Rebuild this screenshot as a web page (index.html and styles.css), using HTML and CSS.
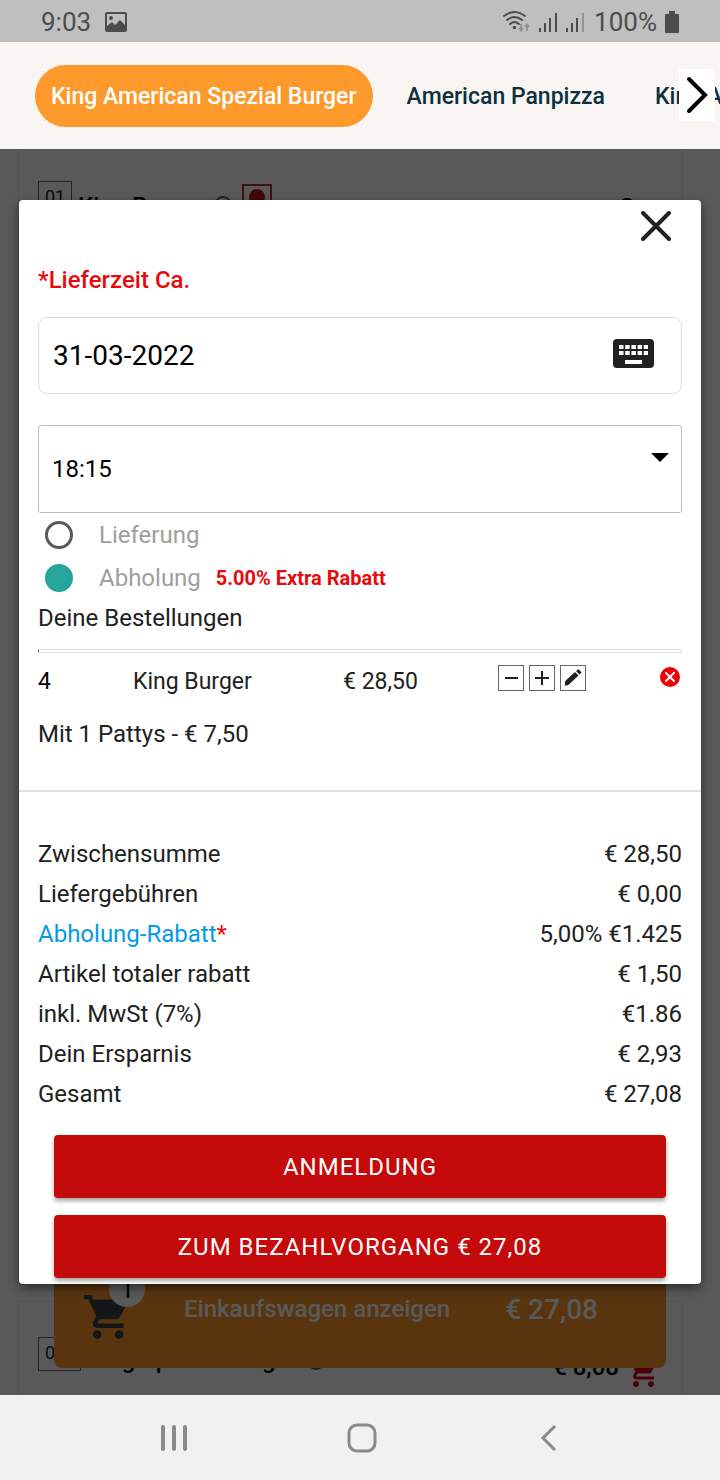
FILE: index.html
```html
<!DOCTYPE html>
<html lang="de">
<head>
    <meta charset="UTF-8">
    <meta name="viewport" content="width=device-width, initial-scale=1.0">
    <title>King Burger - Bestellung</title>
    <link rel="stylesheet" href="styles.css">
</head>
<body>
    <!-- Status bar -->
    <div class="status-bar">
        <span>9:03</span>
        <svg class="status-picture" width="22" height="20" viewBox="0 0 22 20">
            <path fill="#4c4c4c" fill-rule="evenodd" d="M2 0h18a2 2 0 0 1 2 2v16a2 2 0 0 1-2 2H2a2 2 0 0 1-2-2V2a2 2 0 0 1 2-2zM2 2v12l5-4 3 3 5-5 5 5V2zM6 4a2 2 0 1 1 0 4a2 2 0 0 1 0-4z"/>
        </svg>
        <div class="status-right">
            <svg width="28" height="22" viewBox="0 0 28 22">
                <g fill="none" stroke="#4c4c4c" stroke-width="2" stroke-linecap="round">
                    <path d="M2 5q10.500-8 21 0"/>
                    <path d="M5 9q7.500-6 15 0"/>
                    <path d="M8 13q4.500-4 9 0"/>
                </g>
                <circle cx="12.500" cy="16.500" r="1.800" fill="#4c4c4c"/>
                <path d="M19 13v6M17 17l2 2.500 2-2.500M25 20v-6M23 16l2-2.500 2 2.500" fill="none" stroke="#929292" stroke-width="2"/>
            </svg>
            <svg width="20" height="22" viewBox="0 0 20 22">
                <path d="M2 17v4M7 12v9M12 7v14M18 2v19" stroke="#4c4c4c" stroke-width="2"/>
            </svg>
            <svg width="20" height="22" viewBox="0 0 20 22">
                <path d="M1 17v4M6 12v9M11 7v14" stroke="#4c4c4c" stroke-width="2"/>
                <path d="M17 2v19" stroke="#929292" stroke-width="2"/>
            </svg>
            <span>100%</span>
            <svg width="14" height="22" viewBox="0 0 14 22">
                <path fill="#4c4c4c" d="M4 0h6v3h3a1 1 0 0 1 1 1v17a1 1 0 0 1-1 1H1a1 1 0 0 1-1-1V4a1 1 0 0 1 1-1h3z"/>
            </svg>
        </div>
    </div>

    <!-- Categories -->
    <nav class="categories">
        <a href="#spezial" class="category active">King American Spezial Burger</a>
        <a href="#panpizza" class="category">American Panpizza</a>
        <a href="#american" class="category">King American</a>
        <button type="button" class="scroll-next" aria-label="Weiter">
            <svg width="22" height="38" viewBox="0 0 22 38">
                <path d="M3 3l16 16L3 35" fill="none" stroke="#000" stroke-width="4" stroke-linecap="round"/>
            </svg>
        </button>
    </nav>

    <div class="shop">
        <main class="menu">
            <div class="product product-first">
                <span class="product-number">01</span>
                <span class="product-name">King Burger</span>
                <svg class="product-info" width="20" height="20" viewBox="0 0 20 20">
                    <circle cx="10" cy="10" r="8" fill="none" stroke="#555" stroke-width="2"/>
                </svg>
                <svg class="product-type" width="30" height="30" viewBox="0 0 30 30">
                    <rect x="1" y="1" width="28" height="28" fill="none" stroke="#b33" stroke-width="2"/>
                    <circle cx="15" cy="13" r="8" fill="#c5121c"/>
                </svg>
                <svg class="product-size" width="16" height="16" viewBox="0 0 16 16">
                    <circle cx="8" cy="8" r="7" fill="none" stroke="#000" stroke-width="2"/>
                </svg>
            </div>
            <div class="product product-second">
                <span class="product-number wide">02</span>
                <span class="product-name">King Spezial Burger</span>
                <svg class="product-info" width="20" height="20" viewBox="0 0 20 20">
                    <circle cx="10" cy="10" r="8" fill="none" stroke="#555" stroke-width="2"/>
                </svg>
                <span class="product-price">€ 8,08</span>
                <svg class="product-cart" width="30" height="30" viewBox="1 2 20 20">
                    <path fill="#d5001c" d="M7 18c-1.100 0-1.990.9-1.990 2S5.900 22 7 22s2-.9 2-2-.9-2-2-2zM1 2v2h2l3.600 7.590-1.350 2.450c-.16.28-.25.61-.25.96 0 1.100.9 2 2 2h12v-2H7.420c-.14 0-.25-.11-.25-.25l.03-.12.9-1.630h7.450c.75 0 1.410-.41 1.750-1.030l3.580-6.490A1 1 0 0 0 20 4H5.210l-.94-2H1zm16 16c-1.100 0-1.990.9-1.990 2s.89 2 1.990 2 2-.9 2-2-.9-2-2-2z"/>
                </svg>
            </div>
            <button type="button" class="cart-bar">
                <span class="cart-icon">
                    <svg width="44" height="44" viewBox="1 2 20 20">
                        <path fill="#3a424a" d="M7 18c-1.100 0-1.990.9-1.990 2S5.900 22 7 22s2-.9 2-2-.9-2-2-2zM1 2v2h2l3.600 7.590-1.350 2.450c-.16.28-.25.61-.25.96 0 1.100.9 2 2 2h12v-2H7.420c-.14 0-.25-.11-.25-.25l.03-.12.9-1.630h7.450c.75 0 1.410-.41 1.750-1.030l3.580-6.490A1 1 0 0 0 20 4H5.210l-.94-2H1zm16 16c-1.100 0-1.990.9-1.990 2s.89 2 1.990 2 2-.9 2-2-.9-2-2-2z"/>
                    </svg>
                    <span class="cart-count">1</span>
                </span>
                <span class="cart-label">Einkaufswagen anzeigen</span>
                <span class="cart-total">€ 27,08</span>
            </button>
        </main>

        <div class="overlay">
            <form class="modal">
                <button type="button" class="close" aria-label="Schließen">
                    <svg width="30" height="30" viewBox="0 0 30 30">
                        <path d="M2 2l26 26M28 2L2 28" stroke="#212121" stroke-width="4" stroke-linecap="round"/>
                    </svg>
                </button>
                <div class="modal-body">
                    <label class="delivery-label" for="date">*Lieferzeit Ca.</label>
                    <div class="date-field">
                        <input type="text" id="date" value="31-03-2022">
                        <svg width="42" height="30" viewBox="0 0 42 30">
                            <rect x="1" y="1" width="41" height="29" rx="4" fill="#212121"/>
                            <path d="M7 9h29M7 15h29" stroke="#fff" stroke-width="4" stroke-dasharray="4.500 1.700"/>
                            <path d="M13 24h17" stroke="#fff" stroke-width="4"/>
                        </svg>
                    </div>
                    <div class="time-field">
                        <select aria-label="Uhrzeit">
                            <option>18:15</option>
                        </select>
                        <svg width="18" height="9" viewBox="0 0 18 9"><path d="M0 0h18L9 9z"/></svg>
                    </div>
                    <label class="option">
                        <input type="radio" name="type">
                        <span>Lieferung</span>
                    </label>
                    <label class="option">
                        <input type="radio" name="type" checked>
                        <span>Abholung</span>
                        <b>5.00% Extra Rabatt</b>
                    </label>
                    <h2>Deine Bestellungen</h2>
                    <hr>
                    <div class="order-item">
                        <span class="order-qty">4</span>
                        <span>King Burger</span>
                        <span>€ 28,50</span>
                        <div class="order-actions">
                            <button type="button" aria-label="Weniger">
                                <svg width="24" height="24" viewBox="0 0 24 24"><path d="M6 12h13" stroke="#212121" stroke-width="2"/></svg>
                            </button>
                            <button type="button" aria-label="Mehr">
                                <svg width="24" height="24" viewBox="0 0 24 24"><path d="M5 12h14M12 5v14" stroke="#212121" stroke-width="2"/></svg>
                            </button>
                            <button type="button" aria-label="Bearbeiten">
                                <svg width="24" height="24" viewBox="0 0 24 24"><path fill="#212121" d="M4 16.500c0-1 .3-1.500 1-2.200L14 6l3.500 3.500L8.500 18c-.7.700-1.500 1.500-2.500 1.500H4zM15 5l1.500-1.300a1 1 0 0 1 1.400 0L20 5.800a1 1 0 0 1 0 1.400L18.500 8.500z"/></svg>
                            </button>
                        </div>
                        <button type="button" class="remove" aria-label="Entfernen">
                            <svg width="20" height="20" viewBox="0 0 20 20">
                                <circle cx="10" cy="10" r="10" fill="#f00000"/>
                                <path d="M6 6l8 8M14 6l-8 8" stroke="#fff" stroke-width="2" stroke-linecap="round"/>
                            </svg>
                        </button>
                    </div>
                    <p class="order-extra">Mit 1 Pattys - € 7,50</p>
                </div>
                <div class="summary">
                    <table>
                        <tr><th>Zwischensumme</th><td>€ 28,50</td></tr>
                        <tr><th>Liefergebühren</th><td>€ 0,00</td></tr>
                        <tr><th><a href="#rabatt">Abholung-Rabatt</a><span class="star">*</span></th><td>5,00% €1.425</td></tr>
                        <tr><th>Artikel totaler rabatt</th><td>€ 1,50</td></tr>
                        <tr><th>inkl. MwSt (7%)</th><td>€1.86</td></tr>
                        <tr><th>Dein Ersparnis</th><td>€ 2,93</td></tr>
                        <tr><th>Gesamt</th><td>€ 27,08</td></tr>
                    </table>
                    <div class="button-group">
                        <button type="button">ANMELDUNG</button>
                        <button type="submit">ZUM BEZAHLVORGANG € 27,08</button>
                    </div>
                </div>
            </form>
        </div>
    </div>

    <!-- System navigation -->
    <div class="system-nav">
        <button type="button" aria-label="Letzte Apps">
            <svg width="30" height="30" viewBox="0 0 30 30"><path d="M4 4v22M15 4v22M26 4v22" stroke="#8a8a8a" stroke-width="4" stroke-linecap="round"/></svg>
        </button>
        <button type="button" aria-label="Startseite">
            <svg width="30" height="30" viewBox="0 0 30 30"><rect x="2" y="2" width="26" height="26" rx="8" fill="none" stroke="#8a8a8a" stroke-width="3"/></svg>
        </button>
        <button type="button" aria-label="Zurück">
            <svg width="30" height="30" viewBox="0 0 30 30"><path d="M21 3L9 15l12 12" fill="none" stroke="#8a8a8a" stroke-width="3"/></svg>
        </button>
    </div>
</body>
</html>
```
FILE: styles.css
```css
* {
    box-sizing: border-box;
}
body {
    margin: 0;
    min-height: 100vh;
    display: flex;
    flex-direction: column;
    font-family: Roboto, sans-serif;
    font-size: 24px;
    line-height: 36px;
    color: #212121;
}
svg {
    display: block;
    flex-shrink: 0;
}
button {
    padding: 0;
    border: none;
    background: none;
    font-family: inherit;
    cursor: pointer;
}
.status-bar {
    display: flex;
    align-items: center;
    height: 42px;
    padding: 2px 41px 0;
    background: #bfbfbf;
    color: #4c4c4c;
    font-size: 26px;
}
.status-picture {
    margin-left: 14px;
}
.status-right {
    display: flex;
    align-items: center;
    gap: 8px;
    margin-left: auto;
}
.categories {
    position: relative;
    display: flex;
    align-items: center;
    height: 107px;
    padding-left: 35px;
    overflow: hidden;
    background: #f9f5f2;
}
.category {
    padding: 14px 16px 12px;
    margin-right: 18px;
    border-radius: 31px;
    color: #0c313d;
    font-size: 23px;
    font-weight: 500;
    text-decoration: none;
    white-space: nowrap;
}
.category.active {
    background: #fd9a2b;
    color: #fff;
}
.scroll-next {
    position: absolute;
    top: 27px;
    right: 5px;
    padding: 7px;
    background: #fff;
}
.shop {
    display: grid;
    flex: 1;
}
.menu, .overlay {
    grid-area: 1 / 1;
    min-width: 0;
}
.menu {
    position: relative;
    display: flex;
    flex-direction: column;
    padding: 0 37px 0 18px;
}
.product {
    display: flex;
    align-items: flex-start;
    padding: 32px 25px 0 19px;
    border: 1px solid #eee;
}
.product-first {
    flex: 1;
    border-top: none;
    margin-bottom: 17px;
}
.product-second {
    height: 94px;
    padding-top: 35px;
    border-bottom: none;
}
.product-number {
    width: 34px;
    height: 34px;
    border: 1px solid #666;
    font-size: 18px;
    line-height: 30px;
    padding-left: 6px;
}
.product-number.wide {
    width: 43px;
}
.product-name {
    margin: 5px 0 0 6px;
    font-weight: 500;
    color: #000;
}
.product-first .product-name {
    margin-top: 7px;
}
.product-price {
    margin: 12px 8px 0 auto;
    font-weight: 500;
    color: #000;
}
.product-info {
    margin: 14px 9px 0;
}
.product-type {
    margin-top: 3px;
}
.product-size {
    margin: 17px 22px 0 auto;
}
.product-cart {
    margin-top: 20px;
}
.cart-bar {
    position: absolute;
    left: 54px;
    right: 54px;
    bottom: 27px;
    height: 118px;
    display: flex;
    align-items: center;
    padding: 0 68px 0 30px;
    border-radius: 8px;
    background: #fd962b;
    color: #fff;
    font-size: 24px;
    font-weight: 500;
}
.cart-icon {
    position: relative;
    margin-top: 16px;
}
.cart-count {
    position: absolute;
    top: -24px;
    right: -17px;
    width: 36px;
    height: 36px;
    border-radius: 50%;
    background: #fff;
    color: #222;
    font-size: 28px;
    font-weight: 400;
    line-height: 36px;
}
.cart-label {
    margin-left: 56px;
}
.cart-total {
    margin-left: auto;
    font-size: 28px;
}
.overlay {
    z-index: 1;
    padding: 51px 19px 111px;
    background: rgba(0, 0, 0, 0.65);
}
.modal {
    background: #fff;
    border-radius: 4px;
    box-shadow: 0 4px 10px rgba(0, 0, 0, 0.5);
}
.close {
    display: block;
    padding: 11px 30px 0;
    margin-left: auto;
}
.modal-body {
    padding: 21px 19px 38px;
    border-bottom: 2px solid #e0e0e0;
}
.delivery-label {
    display: block;
    color: #e8090c;
    font-weight: 500;
}
.date-field, .time-field {
    display: flex;
    align-items: center;
    border: 1px solid #ddd;
}
.date-field {
    height: 77px;
    margin-top: 19px;
    padding: 0 27px 5px 14px;
    border-radius: 9px;
}
.date-field input {
    flex: 1;
    min-width: 0;
    padding: 5px 0 0;
    border: none;
    font: inherit;
    font-size: 28px;
    color: #000;
}
.time-field {
    position: relative;
    height: 88px;
    margin-top: 31px;
    border-color: #bbb;
    border-radius: 3px;
}
.time-field select {
    width: 100%;
    height: 100%;
    padding: 0 13px;
    border: none;
    appearance: none;
    background: none;
    font: inherit;
    color: #000;
}
.time-field svg {
    position: absolute;
    right: 12px;
    top: 27px;
    pointer-events: none;
}
.option {
    display: flex;
    align-items: center;
    height: 43px;
    padding-left: 7px;
    color: #9e9e9e;
}
.option input {
    appearance: none;
    width: 28px;
    height: 28px;
    margin: 0 26px 0 0;
    border: 3px solid #5a5a5a;
    border-radius: 50%;
}
.option input:checked {
    border-color: #26a69a;
    background: #26a69a;
}
.option b {
    margin-left: 15px;
    color: #e8090c;
    font-size: 20px;
}
h2 {
    margin: 0;
    padding: 1px 0 13px;
    font-size: 24px;
    font-weight: 400;
}
hr {
    height: 4px;
    margin: 0;
    border: 1px solid #e0e0e0;
    border-left-color: #777;
}
.order-item {
    display: grid;
    grid-template-columns: 95px 210px 155px 1fr auto;
    align-items: start;
    padding-top: 12px;
    font-size: 23px;
    line-height: 34px;
}
.order-qty {
    color: #000;
}
.order-actions {
    display: flex;
    gap: 5px;
}
.order-actions button {
    border: 1px solid #666;
}
.remove {
    padding: 2px;
}
.order-extra {
    margin: 17px 0 0;
}
.summary {
    padding: 42px 19px 6px;
}
table {
    width: 100%;
    border-collapse: collapse;
}
th, td {
    height: 40px;
    padding: 0;
    font-weight: 400;
    text-align: left;
}
td {
    text-align: right;
}
th a {
    color: #039be5;
    text-decoration: none;
}
.star {
    color: #e8090c;
}
.button-group {
    display: flex;
    flex-direction: column;
    gap: 17px;
    padding: 21px 16px 0;
}
.button-group button {
    height: 63px;
    border-radius: 4px;
    background: #c40a0a;
    box-shadow: 0 3px 4px rgba(0, 0, 0, 0.35);
    color: #fff;
    font-size: 24px;
    letter-spacing: 1px;
}
.system-nav {
    display: flex;
    justify-content: space-between;
    align-items: center;
    height: 85px;
    padding: 0 156px 0 159px;
    background: #f1f1f1;
}
```
